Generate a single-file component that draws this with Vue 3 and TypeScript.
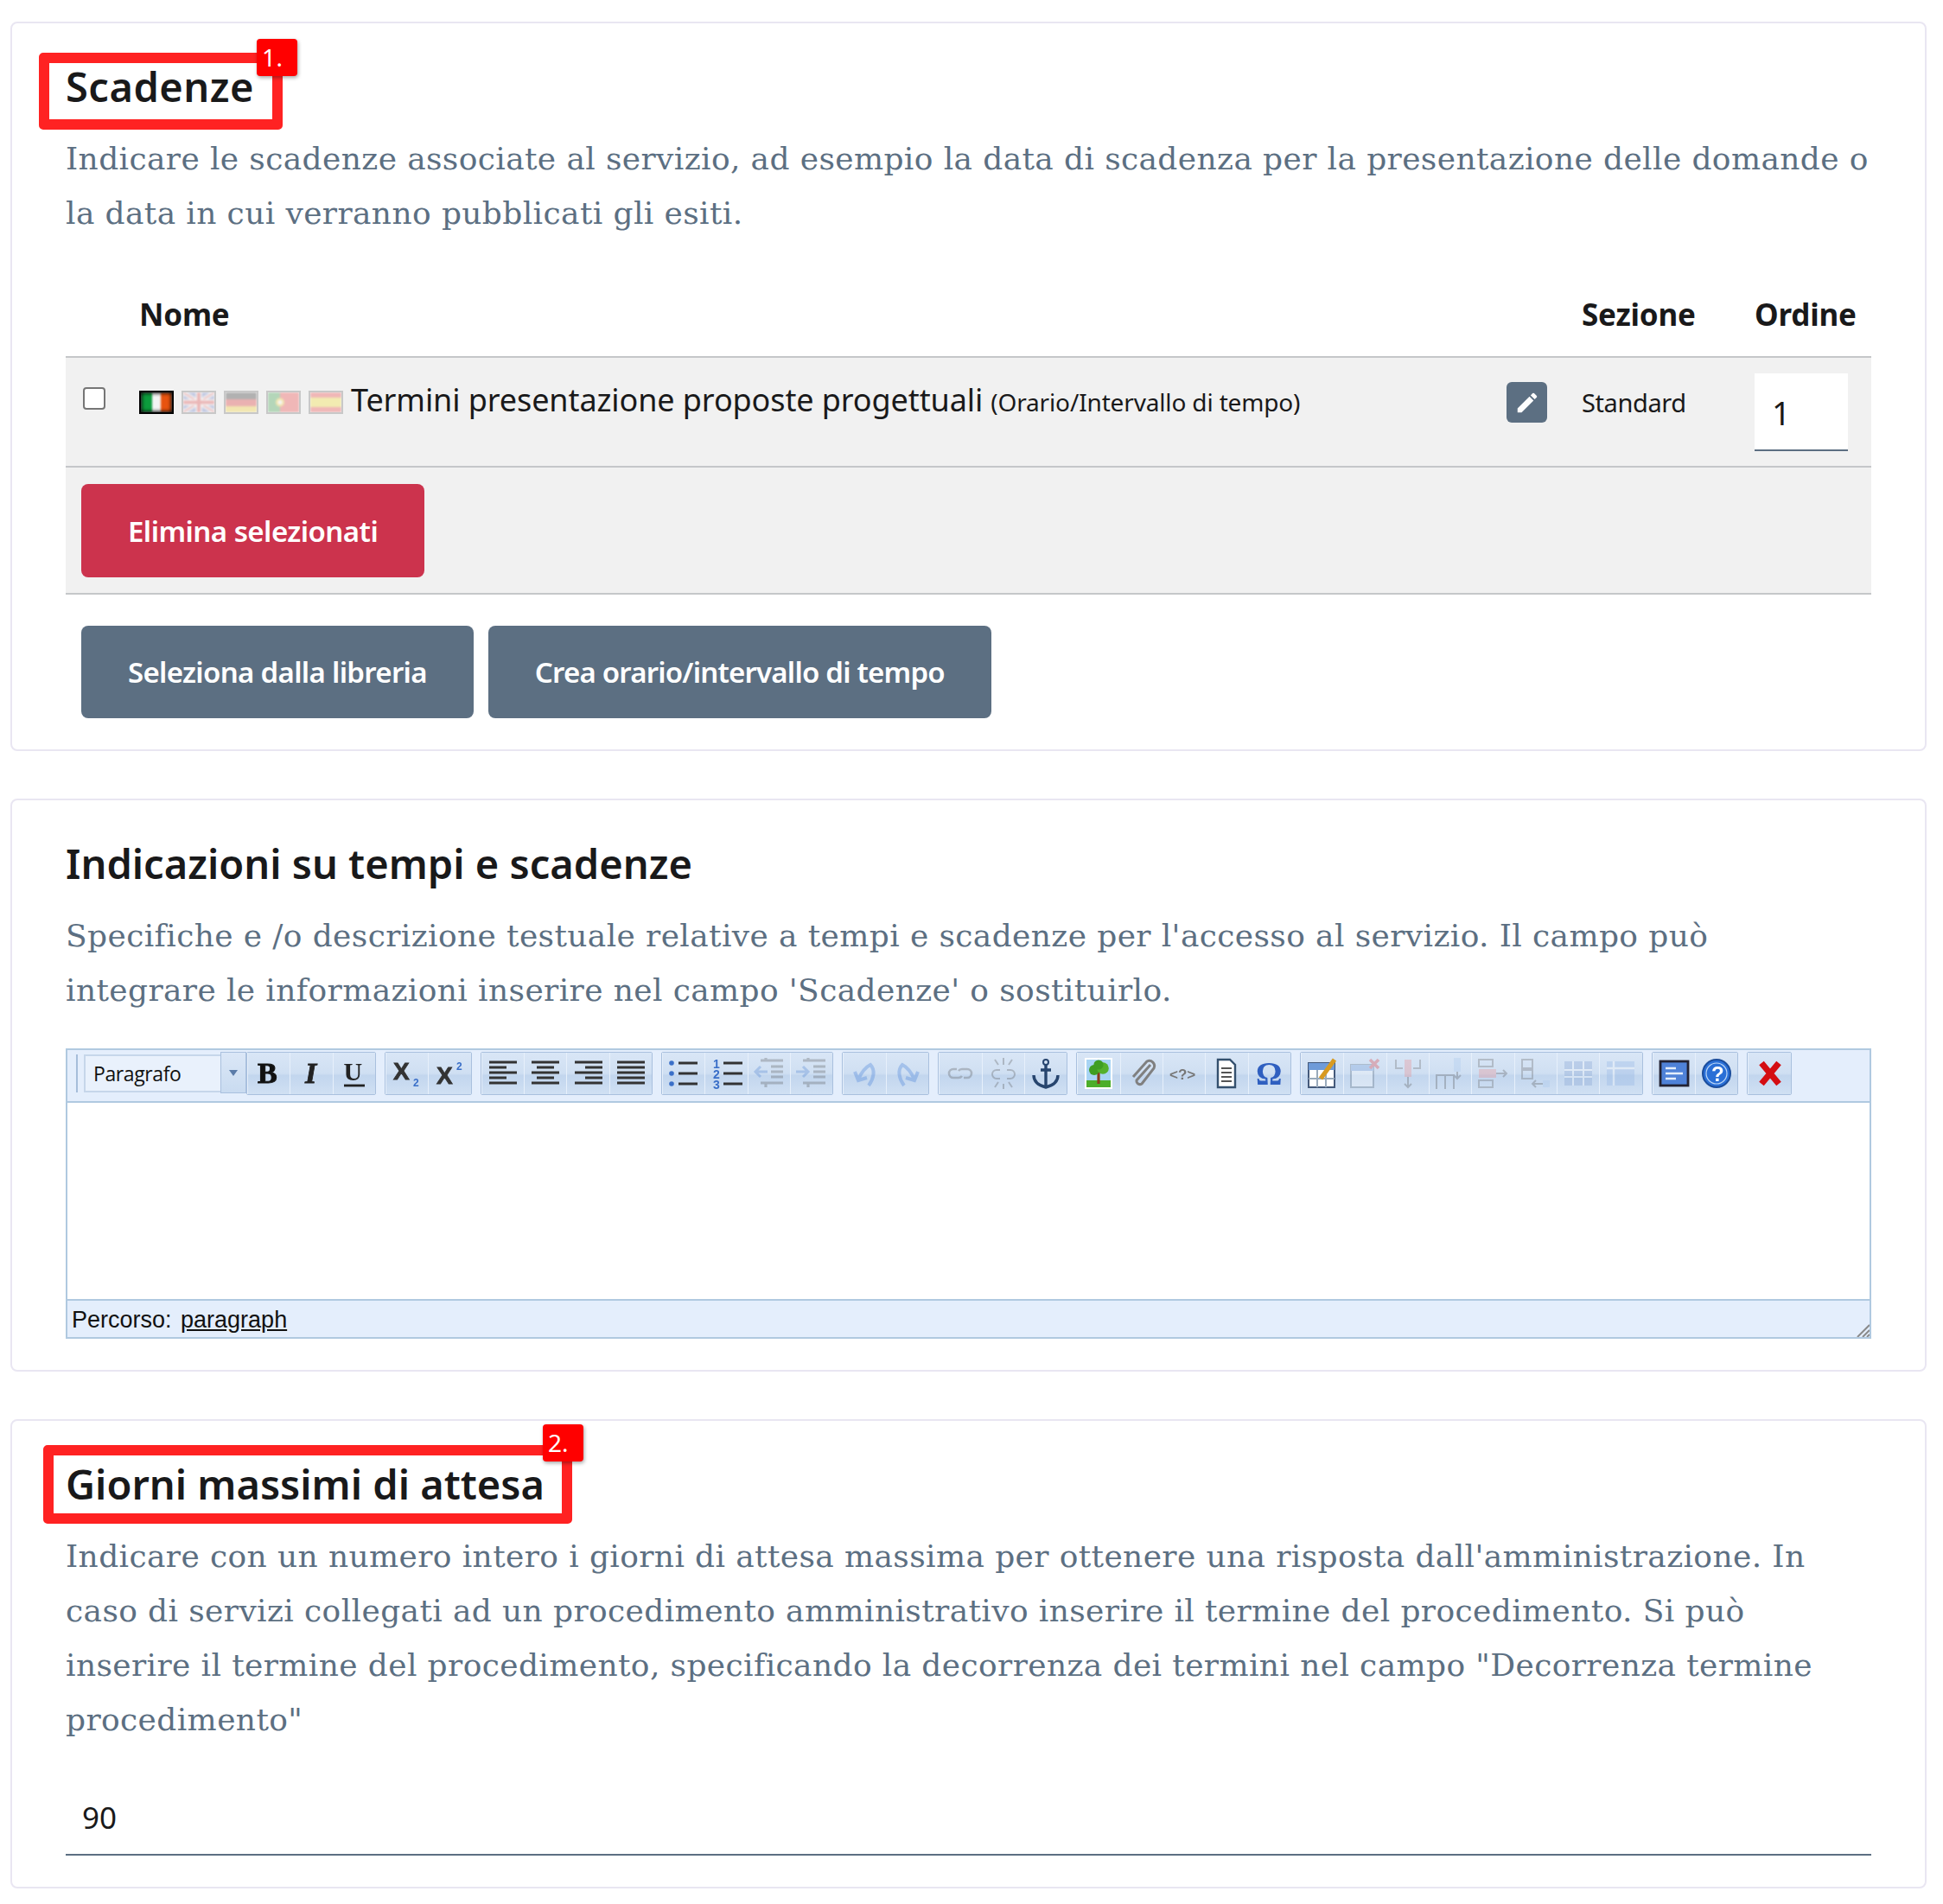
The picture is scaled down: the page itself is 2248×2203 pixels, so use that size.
<script setup lang="ts">
// Scheda scadenze: tre card con intestazioni evidenziate e un editor TinyMCE finto

const flags = [
  { id: 'it', off: false, svg: '<rect width="13" height="27" fill="#0c9b3c"/><rect x="13" width="10" height="27" fill="#f4f4f4"/><rect x="23" width="13" height="27" fill="#e8530f"/>' },
  { id: 'uk', off: true, svg: '<rect width="36" height="23" fill="#5a6fc0"/><path d="M0 0l36 23M36 0L0 23" stroke="#fff" stroke-width="5"/><path d="M0 0l36 23M36 0L0 23" stroke="#d33" stroke-width="1.5"/><path d="M18 0v23M0 11.5h36" stroke="#fff" stroke-width="7"/><path d="M18 0v23M0 11.5h36" stroke="#d33" stroke-width="4"/>' },
  { id: 'de', off: true, svg: '<rect width="36" height="8" fill="#222"/><rect y="8" width="36" height="8" fill="#d22"/><rect y="16" width="36" height="8" fill="#f5d020"/>' },
  { id: 'pt', off: true, svg: '<rect width="14" height="23" fill="#2a9a3c"/><rect x="14" width="22" height="23" fill="#e33"/><circle cx="14" cy="11.5" r="5" fill="#f5d020"/><circle cx="14" cy="11.5" r="2.5" fill="#fff"/>' },
  { id: 'es', off: true, svg: '<rect width="36" height="23" fill="#e33"/><rect y="6" width="36" height="11" fill="#f7e020"/>' },
]

const line = (d: string, c = '#333', w = 1.3) => `<path d="${d}" fill="none" stroke="${c}" stroke-width="${w}"/>`
const txt = (s: string, x: number, y: number, size: number, fill: string, extra = '') =>
  `<text x="${x}" y="${y}" font-size="${size}" fill="${fill}" ${extra}>${s}</text>`

const serifBold = 'font-family="Liberation Serif, serif" font-weight="700"'
const sansBold = 'font-family="Liberation Sans, sans-serif" font-weight="700"'

interface Btn {
  svg: string
  off?: boolean
}

const groups: Btn[][] = [
  [
    { svg: txt('B', 3.5, 15.5, 17, '#111', serifBold + ' stroke="#111" stroke-width=".5"') },
    { svg: txt('I', 6, 15.5, 17, '#222', serifBold + ' font-style="italic" stroke="#222" stroke-width=".4"') },
    { svg: txt('U', 3.8, 14, 15, '#222', serifBold) + line('M4 17h12', '#222', 1.4) },
  ],
  [
    { svg: txt('X', 2, 13.5, 14, '#333', sansBold + ' stroke="#333" stroke-width=".4"') + txt('2', 13.5, 17.5, 6, '#3a6fc8', sansBold) },
    { svg: txt('X', 2, 16, 14, '#333', sansBold + ' stroke="#333" stroke-width=".4"') + txt('2', 13.5, 8, 6, '#3a6fc8', sansBold) },
  ],
  [
    { svg: line('M2 3.5h16M2 6.5h10M2 9.5h16M2 12.5h10M2 15.5h16', '#333', 1.5) },
    { svg: line('M2 3.5h16M5 6.5h10M2 9.5h16M5 12.5h10M2 15.5h16', '#333', 1.5) },
    { svg: line('M2 3.5h16M8 6.5h10M2 9.5h16M8 12.5h10M2 15.5h16', '#333', 1.5) },
    { svg: line('M2 3.5h16M2 6.5h16M2 9.5h16M2 12.5h16M2 15.5h16', '#333', 1.5) },
  ],
  [
    { svg: line('M7 4h11M7 10h11M7 16h11', '#333', 1.6) + '<circle cx="3" cy="4" r="1.4" fill="#3a6fc8"/><circle cx="3" cy="10" r="1.4" fill="#3a6fc8"/><circle cx="3" cy="16" r="1.4" fill="#3a6fc8"/>' },
    { svg: line('M8 4h11M8 10h11M8 16h11', '#333', 1.6) + txt('1', 2, 7, 7, '#3a6fc8', sansBold) + txt('2', 2, 13, 7, '#3a6fc8', sansBold) + txt('3', 2, 19, 7, '#3a6fc8', sansBold) },
    { off: true, svg: line('M5 2.5h13M11 6h7M11 9h7M11 12h7M5 15.5h13M8 1v2M8 15v3', '#555', 1.6) + line('M9 9H2M5 6l-3 3 3 3', '#4a7fd0', 1.5) },
    { off: true, svg: line('M5 2.5h13M11 6h7M11 9h7M11 12h7M5 15.5h13M8 1v2M8 15v3', '#555', 1.6) + line('M1 9h7M5 6l3 3-3 3', '#4a7fd0', 1.5) },
  ],
  [
    { off: true, svg: line('M4 9l2 5 5-1.5M6 13.5C8 9 11 6 13 5c3 3 2 8-1 12', '#3a78d8', 2) },
    { off: true, svg: line('M16 9l-2 5-5-1.5M14 13.5C12 9 9 6 7 5c-3 3-2 8 1 12', '#3a78d8', 2) },
  ],
  [
    { off: true, svg: line('M8 7.5H6a2.5 2.5 0 0 0 0 5h3a2.5 2.5 0 0 0 2-1M12 12.5h2a2.5 2.5 0 0 0 0-5h-3a2.5 2.5 0 0 0-2 1', '#555', 1.3) },
    { off: true, svg: line('M8 8H6a2.5 2.5 0 0 0 0 5h2M12 8h2a2.5 2.5 0 0 1 0 5h-2M10 1v4M10 16v3M5 2l2 3M15 2l-2 3M5 18l2-3M15 18l-2-3', '#555', 1) },
    { svg: line('M10 5v13M7 8h6M3 11c0 4 3 6 7 7 4-1 7-3 7-7', '#27456e', 1.7) + '<circle cx="10" cy="3.5" r="1.5" fill="none" stroke="#27456e" stroke-width="1"/>' },
  ],
  [
    { svg: '<rect x="2" y="1" width="16" height="18" fill="#fff"/><rect x="3" y="2" width="14" height="12" fill="#a8d4f4"/><rect x="3" y="14" width="14" height="4" fill="#4cae2a"/><path d="M10 9v7" stroke="#8a3b1c" stroke-width="1.6"/><circle cx="7.5" cy="8" r="3" fill="#3f9e22"/><circle cx="12.5" cy="7" r="3.4" fill="#54b02c"/><circle cx="10" cy="5" r="2.8" fill="#3f9e22"/>' },
    { svg: line('M15 5L7 14a2 2 0 0 0 3 2l7-9a3 3 0 0 0-4-4L5 12', '#808080', 1.5) },
    { svg: txt('&lt;?&gt;', 1.5, 13.5, 8.5, '#777', sansBold) },
    { svg: '<path d="M5 2h7l3 3v13H5z" fill="#fff" stroke="#34506e" stroke-width="1.2"/>' + line('M7 7h6M7 9.5h6M7 12h6M7 14.5h6', '#555', 1) },
    { svg: txt('Ω', 2, 16.5, 19, '#2f5fc0', serifBold) },
  ],
  [
    { svg: '<rect x="2" y="4" width="15" height="14" fill="#fff" stroke="#44597a" stroke-width="1"/><rect x="2" y="4" width="15" height="4" fill="#6f9bd8"/>' + line('M7 8v10M12 8v10M2 13h15', '#9ab', 1) + line('M9 13l8-11', '#d89a20', 2.6) },
    { off: true, svg: '<rect x="2" y="5" width="13" height="13" fill="#fff" stroke="#567" stroke-width="1"/><rect x="2" y="5" width="13" height="3.5" fill="#6f9bd8"/>' + line('M13 2l5 5M18 2l-5 5', '#d33', 1.8) },
    { off: true, svg: line('M3 2v5h4M17 2v5h-4', '#666', 1) + '<rect x="8" y="2" width="4" height="10" fill="#e88"/>' + line('M10 12v6M8 16l2 2 2-2', '#555', 1) },
    { off: true, svg: '<rect x="12" y="1" width="4" height="8" fill="#a9c8ee"/>' + line('M14 9v4M12 11l2 2 2-2M2 19v-8h5v8M7 11h5v8', '#555', 1) },
    { off: true, svg: line('M2 2h8v4H2zM2 14h8v4H2z', '#666', 1) + '<rect x="2" y="7.5" width="10" height="5" fill="#e88"/>' + line('M12 10h6M16 8l2 2-2 2', '#555', 1) },
    { off: true, svg: line('M2 2h6v5H2zM2 8h6v5H2z', '#666', 1) + '<rect x="14" y="14" width="4" height="4" fill="#a9c8ee"/>' + line('M8 16h6M10 14l-2 2 2 2', '#555', 1) },
    { off: true, svg: '<rect x="2" y="3" width="16" height="14" fill="#7f9ed0"/>' + line('M7 3v14M13 3v14M2 8h16M2 12h16', '#fff', 1) },
    { off: true, svg: '<rect x="2" y="3" width="16" height="14" fill="#8fb2e4"/>' + line('M2 7h16M6 3v14', '#fff', 1.2) },
  ],
  [
    { svg: '<rect x="2" y="3" width="16" height="14" fill="#4f82d8" stroke="#223" stroke-width="1.4"/>' + line('M5 7h6M5 10h10M5 13h6', '#e4eefb', 1.2) },
    { svg: '<circle cx="10" cy="10" r="8" fill="#2a6fd6" stroke="#1b4d9c" stroke-width="1"/><circle cx="10" cy="10" r="6" fill="none" stroke="#bcd7f7" stroke-width=".6"/>' + txt('?', 7, 14.5, 12, '#fff', sansBold) },
  ],
  [{ svg: line('M5 4l10 12M15 4L5 16', '#d40d12', 3.6) }],
]

const pencil = 'M3 17.25V21h3.75L17.81 9.94l-3.75-3.75L3 17.25zM20.71 7.04a1 1 0 0 0 0-1.41l-2.34-2.34a1 1 0 0 0-1.41 0l-1.83 1.83 3.75 3.75 1.83-1.83z'
</script>

<template>
  <div class="page">
    <section class="card">
      <h3 class="title marked first">Scadenze<span class="box" /><span class="num">1.</span></h3>
      <p class="lead">
        Indicare le scadenze associate al servizio, ad esempio la data di scadenza per la presentazione delle domande o
        <br />la data in cui verranno pubblicati gli esiti.
      </p>

      <div class="grid head">
        <span />
        <span>Nome</span>
        <span />
        <span>Sezione</span>
        <span>Ordine</span>
      </div>
      <div class="grid row">
        <span class="cell-check"><input type="checkbox" class="check" /></span>
        <span class="cell-name">
          <span v-for="f in flags" :key="f.id" class="flag" :class="{ off: f.off }">
            <svg viewBox="0 0 36 23" preserveAspectRatio="none" v-html="f.svg" />
          </span>
          <span class="name">Termini presentazione proposte progettuali</span>
          <small class="kind">(Orario/Intervallo di tempo)</small>
        </span>
        <span class="cell-edit">
          <span class="edit">
            <svg viewBox="0 0 24 24" width="30" height="30"><path :d="pencil" fill="#fff" /></svg>
          </span>
        </span>
        <span class="section">Standard</span>
        <span class="cell-order"><span class="order">1</span></span>
      </div>
      <div class="row-foot">
        <button class="btn danger">Elimina selezionati</button>
      </div>
      <div class="actions">
        <button class="btn">Seleziona dalla libreria</button>
        <button class="btn">Crea orario/intervallo di tempo</button>
      </div>
    </section>

    <section class="card">
      <h3 class="title">Indicazioni su tempi e scadenze</h3>
      <p class="lead">
        Specifiche e /o descrizione testuale relative a tempi e scadenze per l'accesso al servizio. Il campo può
        <br />integrare le informazioni inserire nel campo 'Scadenze' o sostituirlo.
      </p>

      <div class="editor">
        <div class="toolbar">
          <span class="handle" />
          <span class="select">Paragrafo</span>
          <span class="caret"><i /></span>
          <div v-for="(g, i) in groups" :key="i" class="group">
            <span v-for="(b, j) in g" :key="j" class="tool" :class="{ off: b.off }">
              <svg viewBox="0 0 20 20" width="40" height="40" v-html="b.svg" />
            </span>
          </div>
        </div>
        <div class="content" />
        <div class="status">
          Percorso: <u class="crumb">paragraph</u>
          <svg class="grip" viewBox="0 0 16 16" width="16" height="16">
            <path d="M2 16L16 2M8 16l8-8M13 16l3-3" stroke="#8a8a8a" stroke-width="2" fill="none" />
          </svg>
        </div>
      </div>
    </section>

    <section class="card">
      <h3 class="title marked second">Giorni massimi di attesa<span class="box" /><span class="num">2.</span></h3>
      <p class="lead">
        Indicare con un numero intero i giorni di attesa massima per ottenere una risposta dall'amministrazione. In
        <br />caso di servizi collegati ad un procedimento amministrativo inserire il termine del procedimento. Si può
        <br />inserire il termine del procedimento, specificando la decorrenza dei termini nel campo "Decorrenza termine
        <br />procedimento"
      </p>
      <div class="days">90</div>
    </section>
  </div>
</template>

<style>
body {
  margin: 0;
  background: #fff;
}
</style>

<style scoped>
.page {
  display: flex;
  flex-direction: column;
  gap: 55px;
  padding: 25px 19px 18px 12px;
  font-family: 'Noto Sans', sans-serif;
  color: #19191a;
}

.card {
  border: 2px solid #e9e6f2;
  border-radius: 8px;
  padding: 43px 62px 36px;
}

.title {
  margin: 0 0 22px;
  font-size: 47px;
  line-height: 60px;
  font-weight: 600;
}

.marked {
  position: relative;
  width: fit-content;
}

.first {
  letter-spacing: 0.5px;
}

.box {
  position: absolute;
  left: -31px;
  right: -33px;
  top: -9px;
  bottom: -20px;
  border: 12px solid #ff2222;
  border-radius: 5px;
  pointer-events: none;
}

.num {
  position: absolute;
  right: -50px;
  top: -25px;
  width: 47px;
  height: 43px;
  box-sizing: border-box;
  padding-left: 6px;
  background: #f00;
  border-radius: 4px;
  box-shadow: 1px 2px 4px rgba(0, 0, 0, 0.35);
  color: #fff;
  font-size: 28px;
  line-height: 43px;
  font-weight: 400;
}

.second .box {
  left: -26px;
  right: -32px;
  top: -15px;
  bottom: -16px;
}

.second .num {
  right: -45px;
  top: -39px;
}

.lead {
  margin: 0;
  font-family: 'DejaVu Serif', serif;
  font-size: 36px;
  line-height: 63px;
  letter-spacing: 0.38px;
  color: #5c6f82;
}

.grid {
  display: grid;
  grid-template-columns: 85px 1582px 87px 200px 135px;
}

.head {
  height: 136px;
  box-sizing: border-box;
  align-items: end;
  padding-bottom: 23px;
  border-bottom: 2px solid #c5c7c9;
  font-size: 35px;
  line-height: 50px;
  font-weight: 700;
  letter-spacing: -0.2px;
}

.row {
  height: 127px;
  box-sizing: border-box;
  background: #f1f1f1;
  border-bottom: 2px solid #c5c7c9;
}

.cell-check {
  padding: 34px 0 0 20px;
}

.check {
  display: block;
  appearance: none;
  box-sizing: border-box;
  width: 26px;
  height: 26px;
  margin: 0;
  background: #fff;
  border: 2px solid #767676;
  border-radius: 4px;
}

.cell-name {
  display: flex;
  align-items: center;
  height: 50px;
  margin-top: 26px;
  gap: 9px;
}

.flag {
  position: relative;
  flex: none;
  width: 40px;
  height: 27px;
  box-sizing: border-box;
  border: 2px solid #000;
  overflow: hidden;
}

.flag::after {
  content: '';
  position: absolute;
  inset: 0;
  box-shadow: inset 0 0 4px 1px #000;
}

.flag.off::after {
  box-shadow: none;
}

.flag svg {
  display: block;
  width: 100%;
  height: 100%;
  filter: blur(1px);
}

.flag.off {
  border-color: #c8c8c8;
}

.flag.off svg {
  opacity: 0.3;
}

.name {
  margin-bottom: 6px;
  font-size: 36px;
  letter-spacing: -0.1px;
  white-space: nowrap;
}

.kind {
  font-size: 28px;
  letter-spacing: -0.15px;
  white-space: nowrap;
}

.cell-edit {
  padding-top: 28px;
}

.edit {
  display: flex;
  align-items: center;
  justify-content: center;
  width: 47px;
  height: 47px;
  background: #5c6f82;
  border-radius: 6px;
}

.section {
  margin-top: 27px;
  font-size: 29px;
  line-height: 50px;
  letter-spacing: -0.4px;
}

.cell-order {
  padding-top: 18px;
}

.order {
  display: block;
  width: 108px;
  height: 90px;
  box-sizing: border-box;
  background: #fff;
  border-bottom: 2px solid #5c6f82;
  padding: 20px 0 0 20px;
  font-size: 38px;
  line-height: 50px;
}

.row-foot {
  background: #f1f1f1;
  border-bottom: 2px solid #c5c7c9;
  padding: 19px 18px 18px;
}

.actions {
  display: flex;
  gap: 17px;
  padding: 36px 18px 0;
}

.btn {
  display: block;
  height: 107px;
  padding: 0 54px;
  border: 0;
  border-radius: 8px;
  background: #5c6f82;
  color: #fff;
  font-family: 'Noto Sans', sans-serif;
  font-size: 33px;
  font-weight: 600;
  letter-spacing: -0.8px;
  white-space: nowrap;
}

.actions .btn:first-child {
  letter-spacing: -0.68px;
}

.danger {
  height: 108px;
  background: #cc334d;
  letter-spacing: -0.55px;
}

.editor {
  margin-top: 36px;
  border: 2px solid #b0c9e0;
  font-family: 'Liberation Sans', sans-serif;
}

.toolbar {
  display: flex;
  align-items: flex-start;
  height: 61px;
  box-sizing: border-box;
  padding: 2px 0 0 10px;
  background: #e4eefc;
  border-bottom: 2px solid #b0c9e0;
}

.handle {
  width: 2px;
  height: 44px;
  margin-top: 3px;
  background: #a6bdda;
}

.select {
  width: 158px;
  height: 44px;
  box-sizing: border-box;
  margin: 3px 0 0 7px;
  padding-left: 9px;
  border: 2px solid #c6d6ea;
  border-right: 0;
  background: #e9f1fc;
  font-family: 'Open Sans', sans-serif;
  font-size: 23px;
  line-height: 40px;
  letter-spacing: -0.4px;
  color: #111;
}

.caret {
  display: flex;
  align-items: center;
  justify-content: center;
  width: 30px;
  height: 48px;
  box-sizing: border-box;
  border: 1px solid #a9c0de;
  background: linear-gradient(#dbe7f7, #c9dbf0);
}

.caret i {
  width: 0;
  height: 0;
  border: 5px solid transparent;
  border-top: 7px solid #5a7ba8;
  border-bottom: 0;
}

.group {
  display: flex;
  height: 48px;
  margin-right: 10px;
  border: 1px solid #a9c0de;
  border-radius: 2px;
}

.tool {
  display: flex;
  align-items: center;
  justify-content: center;
  width: 49.35px;
  box-sizing: border-box;
  background: linear-gradient(#d9e6f6 0%, #cfdff2 50%, #c2d6ee 55%, #d0e0f3 100%);
  border-left: 1px solid #e7f0fb;
}

.tool svg {
  filter: blur(0.7px);
}

.tool.off svg {
  opacity: 0.3;
}

.content {
  height: 227px;
  background: #fff;
}

.status {
  position: relative;
  height: 44px;
  box-sizing: border-box;
  padding-left: 5px;
  background: #e4eefc;
  border-top: 2px solid #b0c9e0;
  font-size: 27px;
  line-height: 44px;
  color: #111;
}

.crumb {
  margin-left: 3px;
}

.grip {
  position: absolute;
  right: 0;
  bottom: 0;
}

.days {
  height: 88px;
  margin-top: 38px;
  box-sizing: border-box;
  padding: 19px 0 0 19px;
  border-bottom: 2px solid #5c6f82;
  font-size: 35px;
  line-height: 50px;
}
</style>
